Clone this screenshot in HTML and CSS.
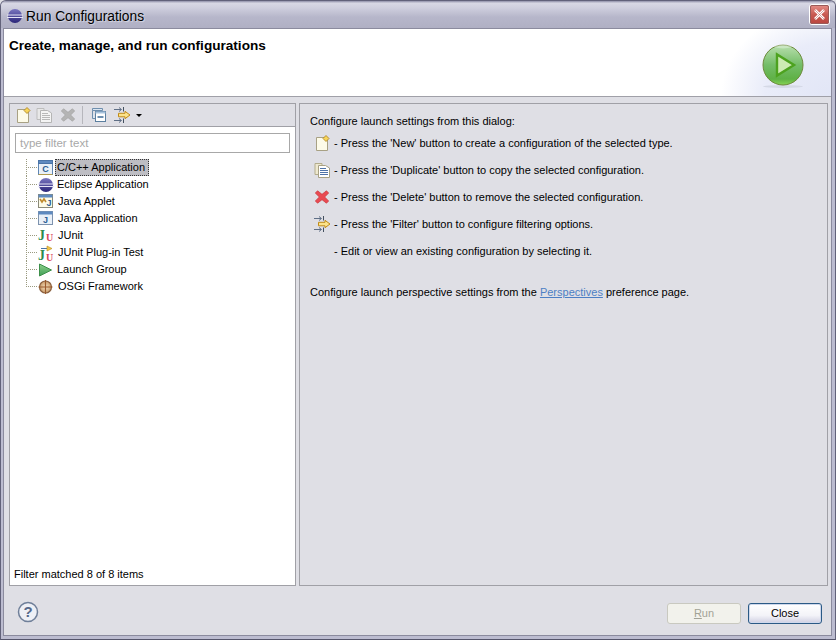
FILE: index.html
```html
<!DOCTYPE html>
<html lang="en">
<head>
<meta charset="utf-8">
<title>Run Configurations</title>
<link rel="stylesheet" href="styles.css">
</head>
<body>
<svg class="defs" width="0" height="0">
  <defs>
    <linearGradient id="gPlay" x1="0" y1="0" x2="0" y2="1"><stop offset="0" stop-color="#b9dfae"/><stop offset="0.5" stop-color="#74bd68"/><stop offset="0.85" stop-color="#5fb145"/><stop offset="1" stop-color="#86d455"/></linearGradient>
    <linearGradient id="gEcl" x1="0" y1="0" x2="0" y2="1"><stop offset="0" stop-color="#7a76c0"/><stop offset="1" stop-color="#2a2578"/></linearGradient>
    <linearGradient id="gLaunch" x1="0" y1="0" x2="0" y2="1"><stop offset="0" stop-color="#8ed08c"/><stop offset="1" stop-color="#3f9f55"/></linearGradient>
    <radialGradient id="gOsgi"><stop offset="0" stop-color="#f6e2c2"/><stop offset="1" stop-color="#c99a66"/></radialGradient>
    <symbol id="iNew" viewBox="0 0 16 16"><path d="M2.500 2.500H10L13.500 5V15.500H2.500Z" fill="#fdfbe9" stroke="#a8a184"/><path d="M12 0.500L15 3.500L12 6.500L9 3.500Z" fill="#f7d55a" stroke="#a87c18" stroke-width=".8"/></symbol>
    <symbol id="iDup" viewBox="0 0 16 16"><path d="M1 1.500H8V12.500H1Z" fill="#eee9d0" stroke="#b3ac8c"/><path d="M4.500 3.500H11.500L15.500 6V15.500H4.500Z" fill="#fff" stroke="#a8a184"/><path d="M6 6.500H12M6 8.500H14M6 10.500H14M6 12.500H14" stroke="#4f73a8"/></symbol>
    <symbol id="iDupOff" viewBox="0 0 16 16"><path d="M1 1.500H8V12.500H1Z" fill="#e8e8e8" stroke="#bdbdbd"/><path d="M4.500 3.500H11.500L15.500 6V15.500H4.500Z" fill="#f4f4f4" stroke="#b5b5b5"/><path d="M6 6.500H12M6 8.500H14M6 10.500H14M6 12.500H14" stroke="#b8b8b8"/></symbol>
    <symbol id="iDel" viewBox="-1 -1 18 18"><path d="M3 1L8 5L13 1L15.500 3.500L11 8L15.500 12.500L13 15L8 11L3 15L.5 12.500L5 8L.5 3.500Z" fill="#e94a52" stroke="#c8383c" stroke-width=".8"/></symbol>
    <symbol id="iDelOff" viewBox="-1 -1 18 18"><path d="M3 1L8 5L13 1L15.500 3.500L11 8L15.500 12.500L13 15L8 11L3 15L.5 12.500L5 8L.5 3.500Z" fill="#b4b4b4" stroke="#a4a4a4" stroke-width=".8"/></symbol>
    <symbol id="iFilter" viewBox="0 0 17 16"><path d="M0 2.500H7M5 .500L7.500 2.500L5 4.500M0 13.500H7M5 11.500L7.500 13.500L5 15.500" fill="none" stroke="#5f6f86"/><path d="M9.500 0V4.500M9.500 11.500V16" stroke="#44505f"/><path d="M4.500 6.300H11V4.300L16 8L11 11.700V9.800H4.500Z" fill="#fbe38a" stroke="#c08a18"/></symbol>
    <symbol id="iCollapse" viewBox="0 0 14 14"><path d="M.5.500H10.500V2.500H.5ZM.5 2.500V10.500H3" fill="#dbe6f2" stroke="#6f8fae"/><rect x="3.500" y="3.500" width="10" height="10" fill="#fff" stroke="#5b7f9f"/><path d="M3.500 3.500H13.500V5.500H3.500Z" fill="#a9c3dc"/><path d="M5.500 9H11.500" stroke="#2e5f8e" stroke-width="1.400"/></symbol>
    <symbol id="iEclipse" viewBox="0 0 16 16"><circle cx="8" cy="8" r="7" fill="url(#gEcl)"/><path d="M0 7H16M0 9.500H16" stroke="#e6e4f6" stroke-width="1.100"/></symbol>
  </defs>
</svg>

<div class="window">
  <header class="titlebar">
    <svg class="title-icon" width="16" height="16"><use href="#iEclipse"/></svg>
    <span class="title-text">Run Configurations</span>
    <button class="close-x" aria-label="Close">
      <svg width="13" height="13" viewBox="0 0 13 13"><path d="M2 2L11 11M11 2L2 11" stroke="#fff" stroke-width="2.600"/><path d="M2 2L11 11M11 2L2 11" stroke="#b04a44" stroke-width=".5"/></svg>
    </button>
  </header>

  <div class="client">
    <section class="banner">
      <h1 class="banner-title">Create, manage, and run configurations</h1>
      <svg class="banner-play" width="46" height="46" viewBox="0 0 46 46">
        <ellipse cx="23" cy="43.500" rx="20" ry="1.500" fill="#d5d9e6"/>
        <circle cx="23" cy="22" r="20" fill="url(#gPlay)" stroke="#6d8a3c" stroke-width="1"/>
        <path d="M13 3.500a20 19 0 0 1 20 0a24 20 0 0 1-20 0Z" fill="#fff" opacity=".3"/>
        <path d="M17 11.500V32.500L34 22Z" fill="#cdebb4" stroke="#4da21f" stroke-width="2.400"/>
      </svg>
    </section>

    <main class="panes">
      <aside class="left-pane">
        <div class="toolbar">
          <svg class="tool" width="16" height="16"><use href="#iNew"/></svg>
          <svg class="tool tool-dup" width="16" height="16"><use href="#iDupOff"/></svg>
          <svg class="tool tool-del" width="16" height="16"><use href="#iDelOff"/></svg>
          <span class="tool-sep"></span>
          <svg class="tool tool-col" width="14" height="14"><use href="#iCollapse"/></svg>
          <svg class="tool tool-fil" width="17" height="16"><use href="#iFilter"/></svg>
          <span class="tool-drop"></span>
        </div>
        <div class="left-body">
          <div class="filter">type filter text</div>
          <ul class="tree">
            <li class="row"><span class="conn"></span>
              <svg class="ticon" width="16" height="16" viewBox="0 0 16 16"><rect x=".5" y=".5" width="14" height="14" fill="#e9f0f8" stroke="#5e86b4"/><rect x=".5" y=".5" width="14" height="3" fill="#5e8ac0" stroke="#4a74a8"/><path d="M.5 14.500H14.500" stroke="#b09a50"/><text x="7.500" y="12" class="ic-letter">C</text></svg>
              <span class="label selected">C/C++ Application</span></li>
            <li class="row"><span class="conn"></span>
              <svg class="ticon" width="16" height="16"><use href="#iEclipse"/></svg>
              <span class="label">Eclipse Application</span></li>
            <li class="row"><span class="conn"></span>
              <svg class="ticon" width="16" height="16" viewBox="0 0 16 16"><rect x=".5" y=".5" width="14" height="13" fill="#fdfbe8" stroke="#8a8a78"/><rect x=".5" y=".5" width="14" height="3" fill="#5e8ac0"/><path d="M2 5L4 8L6 5L8 8" fill="none" stroke="#c08a2c" stroke-width="1.600"/><text x="11" y="12" class="ic-letter">J</text></svg>
              <span class="label lab-j">Java Applet</span></li>
            <li class="row"><span class="conn"></span>
              <svg class="ticon" width="16" height="16" viewBox="0 0 16 16"><rect x=".5" y=".5" width="14" height="13" fill="#e9f0f8" stroke="#7d92ae"/><rect x=".5" y=".5" width="14" height="3" fill="#5e8ac0"/><text x="7.500" y="12" class="ic-letter">J</text></svg>
              <span class="label lab-j">Java Application</span></li>
            <li class="row"><span class="conn"></span>
              <svg class="ticon" width="16" height="16" viewBox="0 0 16 16"><text x="0" y="12" class="ic-ju-j">J</text><text x="8" y="13" class="ic-ju-u">U</text></svg>
              <span class="label lab-j">JUnit</span></li>
            <li class="row"><span class="conn"></span>
              <svg class="ticon" width="16" height="16" viewBox="0 0 16 16"><path d="M3 3.500H9" stroke="#4a74a8"/><path d="M9 1L14 3.500L9 6Z" fill="#f4c94a" stroke="#b98a1e" stroke-width=".6"/><text x="0" y="15" class="ic-ju-j">J</text><text x="8" y="16" class="ic-ju-u">U</text></svg>
              <span class="label lab-j">JUnit Plug-in Test</span></li>
            <li class="row"><span class="conn"></span>
              <svg class="ticon" width="16" height="16" viewBox="0 0 16 16"><path d="M1.500 2V14L13.500 8Z" fill="url(#gLaunch)" stroke="#3d8f4a"/></svg>
              <span class="label">Launch Group</span></li>
            <li class="row last"><span class="conn"></span>
              <svg class="ticon" width="16" height="16" viewBox="0 0 16 16"><circle cx="7.500" cy="8" r="6" fill="url(#gOsgi)" stroke="#8a6040" stroke-width="1.200"/><path d="M7.500 1V15M.5 8H14.500" stroke="#9a5a2c" stroke-width="1.200"/></svg>
              <span class="label lab-j">OSGi Framework</span></li>
          </ul>
          <div class="status">Filter matched 8 of 8 items</div>
        </div>
      </aside>

      <section class="right-pane">
        <p class="intro">Configure launch settings from this dialog:</p>
        <div class="help"><span class="help-ic"><svg width="16" height="16"><use href="#iNew"/></svg></span><span>- Press the 'New' button to create a configuration of the selected type.</span></div>
        <div class="help"><span class="help-ic"><svg width="16" height="16"><use href="#iDup"/></svg></span><span>- Press the 'Duplicate' button to copy the selected configuration.</span></div>
        <div class="help"><span class="help-ic"><svg width="16" height="16"><use href="#iDel"/></svg></span><span>- Press the 'Delete' button to remove the selected configuration.</span></div>
        <div class="help"><span class="help-ic"><svg width="17" height="16"><use href="#iFilter"/></svg></span><span>- Press the 'Filter' button to configure filtering options.</span></div>
        <div class="help"><span class="help-ic"></span><span>- Edit or view an existing configuration by selecting it.</span></div>
        <p class="outro">Configure launch perspective settings from the <a href="#" class="link">Perspectives</a> preference page.</p>
      </section>
    </main>

    <footer class="footer">
      <svg class="help-btn" width="22" height="22" viewBox="0 0 22 22"><circle cx="11" cy="11" r="9.500" fill="#eef0f6" stroke="#6f7f99" stroke-width="1.500"/><text x="11" y="16" class="ic-q">?</text></svg>
      <div class="buttons">
        <button class="btn disabled"><span class="ul">R</span>un</button>
        <button class="btn primary">Close</button>
      </div>
    </footer>
  </div>
</div>
</body>
</html>
```

FILE: styles.css
```css
* { box-sizing: border-box; }
html, body { margin: 0; padding: 0; }
body { width: 836px; height: 640px; overflow: hidden; background: #dfdfe5; font-family: "Liberation Sans", Arial, sans-serif; font-size: 11px; color: #000; }
.defs { display: block; position: absolute; }
.window { width: 836px; height: 640px; display: flex; flex-direction: column; border-radius: 6px 6px 0 0; background: #bcbcd0; border: 1px solid #62627a; border-bottom-color: #55556b; }
.titlebar { height: 27px; flex: none; display: flex; align-items: center; padding: 0 5px 0 6px; border-radius: 5px 5px 0 0; background: linear-gradient(to bottom, #8f8fa8 0, #d8d8e4 8%, #cfcfde 25%, #b6b6ca 60%, #b0b0c4 100%); }
.title-icon { flex: none; margin-top: 2px; }
.title-text { margin: 3px 0 0 3px; font-size: 13.800px; color: #000; text-shadow: 1px 1px 1px rgba(255,255,255,.5); flex: 1; }
.close-x { width: 21px; height: 21px; padding: 0; display: flex; align-items: center; justify-content: center; border: 1px solid #fff; border-radius: 3px; background: linear-gradient(to bottom, #e58f88, #c95a52 50%, #b9453e); outline: 1px solid #9a5a58; outline-offset: -2px; margin-top: -1px; }

.client { flex: 1; min-height: 0; display: flex; flex-direction: column; margin: 0 3px 3px 2px; background: #dfdfe5; border: 1px solid #8b8b9e; }
.banner { height: 68px; flex: none; display: flex; justify-content: space-between; padding: 9px 25px 0 5px; border-bottom: 1px solid #a0a0a8; background: radial-gradient(ellipse 110px 90px at 100% 100%, #e2e6f6 0, #e9ecf9 60%, #ffffff 100%), #fff; }
.banner-title { margin: 0; font-size: 13.600px; font-weight: 700; line-height: 15px; }
.banner-play { margin-top: 5px; flex: none; }

.panes { flex: 1; min-height: 0; display: flex; gap: 3px; padding: 6px 3px 0 5px; }
.left-pane { width: 287px; flex: none; display: flex; flex-direction: column; border: 1px solid #a0a0a6; }
.right-pane { flex: 1; min-width: 0; border: 1px solid #a0a0a6; padding: 10px 10px 0 10px; line-height: 14px; }

.toolbar { height: 23px; flex: none; display: flex; align-items: center; padding: 0 0 0 5px; border-bottom: 1px solid #a0a0a6; }
.tool { flex: none; }
.tool-dup { margin-left: 5px; }
.tool-del { margin-left: 8px; }
.tool-sep { width: 1px; height: 18px; background: #b6b6bc; margin-left: 6px; }
.tool-col { margin-left: 9px; }
.tool-fil { margin-left: 8px; }
.tool-drop { width: 0; height: 0; margin-left: 5px; border-left: 3px solid transparent; border-right: 3px solid transparent; border-top: 3px solid #000; }

.left-body { flex: 1; min-height: 0; display: flex; flex-direction: column; background: #fff; }
.filter { height: 20px; margin: 6px 5px 0 5px; flex: none; border: 1px solid #a8a8a8; padding: 0 4px; line-height: 18px; font-size: 11.500px; color: #a8a8a8; background: #fff; }
.tree { list-style: none; margin: 6px 0 0 0; padding: 0 0 0 16px; flex: 1; }
.row { height: 17px; display: flex; align-items: center; }
.conn { width: 12px; height: 17px; flex: none; background-image: repeating-linear-gradient(to bottom, #9a9a80 0 1px, transparent 1px 2px), repeating-linear-gradient(to right, #9a9a80 0 1px, transparent 1px 2px); background-size: 1px 100%, 100% 1px; background-position: 0 0, 0 8px; background-repeat: no-repeat; }
.row.last .conn { background-size: 1px 9px, 100% 1px; }
.ticon { flex: none; overflow: visible; }
.label { margin-left: 1px; line-height: 15px; padding: 0 1px; border: 1px dotted transparent; white-space: nowrap; }
.lab-j { margin-left: 2px; }
.label.selected { background: #bdbdc3; border-color: #333; padding-right: 3px; }
.ic-letter { font: 700 9px "Liberation Sans", sans-serif; fill: #2d5f95; text-anchor: middle; }
.ic-ju-j { font: 700 14px "Liberation Serif", serif; fill: #2d8a4e; }
.ic-ju-u { font: 700 10px "Liberation Serif", serif; fill: #d8455c; }
.ic-q { font: 700 15px "Liberation Sans", sans-serif; fill: #55688a; text-anchor: middle; }
.status { height: 23px; flex: none; padding: 5px 4px 0 4px; line-height: 14px; }

.intro { margin: 0 0 1px 0; line-height: 14px; }
.help { height: 27px; display: flex; align-items: center; white-space: nowrap; }
.help-ic { width: 24px; flex: none; display: flex; justify-content: center; }
.outro { margin: 21px 0 0 0; }
.link { color: #4d7fc4; text-decoration: underline; }

.footer { height: 49px; flex: none; display: flex; align-items: flex-start; justify-content: space-between; padding: 15px 9px 0 13px; }
.help-btn { flex: none; }
.buttons { display: flex; gap: 7px; margin-top: 2px; }
.btn { width: 74px; height: 21px; padding: 0; font: inherit; border-radius: 3px; line-height: 17px; }
.btn.disabled { border: 1px solid #c9c9c0; background: #f2f2ec; color: #a2a296; }
.btn.primary { border: 1px solid #2b5a86; background: linear-gradient(to bottom, #fff 0, #f3f3f8 60%, #cfcfe2 100%); color: #000; box-shadow: inset 0 0 0 1px #cfd8ec; }
.ul { text-decoration: underline; }
```
